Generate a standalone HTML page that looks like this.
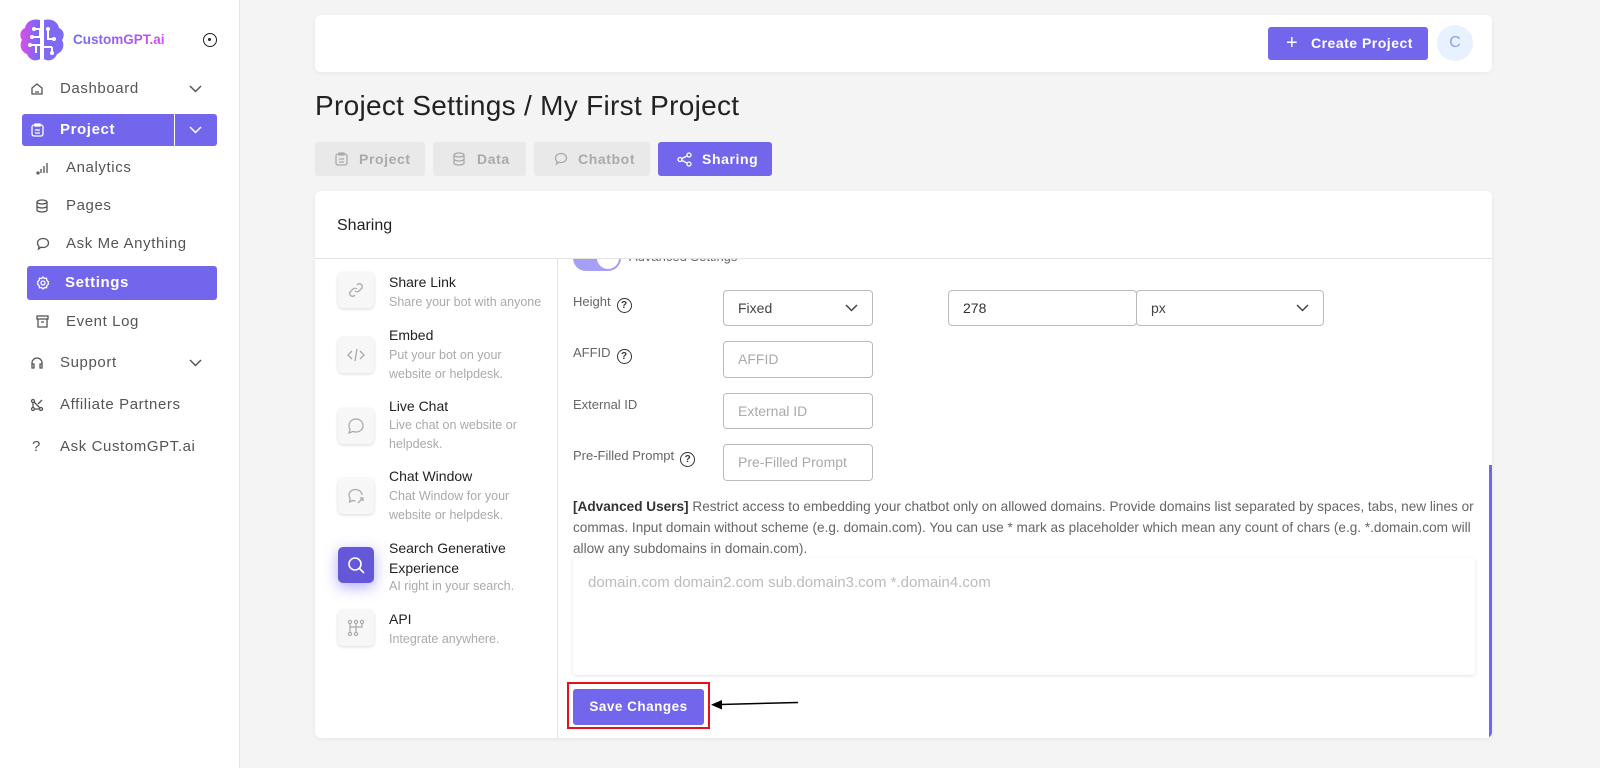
<!DOCTYPE html>
<html><head><meta charset="utf-8"><style>
*{box-sizing:border-box;margin:0;padding:0}
body{width:1600px;height:768px;background:#f4f4f4;font-family:"Liberation Sans","DejaVu Sans",sans-serif;color:#333;position:relative;overflow:hidden}
.abs{position:absolute}
#side{left:0;top:0;width:240px;height:768px;background:#fff;border-right:1px solid #e6e6e6}
.nav{position:absolute;left:0;width:240px;font-size:15px;color:#555;letter-spacing:.6px;height:32px;line-height:32px}
.nav svg{position:absolute;top:9px}
.card{background:#fff;border-radius:6px;box-shadow:0 1px 4px rgba(0,0,0,.06)}
.tab{position:absolute;top:142px;height:34px;background:#e9e9e9;border-radius:3px;color:#aaa;font-weight:bold;font-size:14px;line-height:34px;letter-spacing:.6px}
.tab svg{position:absolute;top:10px}
.ib{position:absolute;left:338px;width:36px;height:36px;background:#f7f7f7;border-radius:5px;box-shadow:0 1px 3px rgba(0,0,0,.15)}
.ib svg{position:absolute;left:9px;top:9px}
.it{position:absolute;left:389px;font-size:14px;color:#222}
.is{position:absolute;left:389px;font-size:12.5px;color:#aaa;line-height:19px}
.lbl{position:absolute;left:573px;font-size:13px;color:#666}
.q{display:inline-block;width:15px;height:15px;border:1.3px solid #333;border-radius:50%;font-size:10px;line-height:13px;text-align:center;color:#333;margin-left:6px;vertical-align:-2px;font-weight:bold}
.inp{position:absolute;border:1px solid #bbb;border-radius:4px;background:#fff;font-size:14px;color:#aaa;padding-left:14px;line-height:34px}
.chev{position:absolute;right:14px;top:13px}
</style></head><body>
<div id="side" class="abs">
 <svg class="abs" style="left:18px;top:17px" width="48" height="46" viewBox="0 0 48 46">
  <defs><linearGradient id="g" x1="0" x2="1"><stop offset="0" stop-color="#e04ce8"/><stop offset="1" stop-color="#6b6cf5"/></linearGradient></defs>
  <path d="M22 3C14 1 8 5 7 11 2 13 1 19 4 23 1 28 3 35 9 37 11 43 18 45 22 42Z" fill="url(#g)"/>
  <path d="M26 3C34 1 40 5 41 11 46 13 47 19 44 23 47 28 45 35 39 37 37 43 30 45 26 42Z" fill="#7f6af3"/>
  <g stroke="#fff" stroke-width="2" fill="none"><path d="M16 12h6v8h-8M12 28h10M18 36v-8M30 12v10h6M26 30h8M34 30v6"/></g>
  <g fill="#fff"><circle cx="16" cy="12" r="2"/><circle cx="14" cy="20" r="2"/><circle cx="12" cy="28" r="2"/><circle cx="36" cy="22" r="2"/><circle cx="34" cy="36" r="2"/><circle cx="30" cy="12" r="2"/></g>
 </svg>
 <div class="abs" style="left:73px;top:32px;font-weight:bold;font-size:13.5px;background:linear-gradient(90deg,#6b6cf5,#d44cf0);-webkit-background-clip:text;color:transparent">CustomGPT.ai</div>
 <div class="abs" style="left:203px;top:33px;width:14px;height:14px;border:1.5px solid #222;border-radius:50%"><div style="position:absolute;left:4px;top:4px;width:3px;height:3px;background:#222;border-radius:50%"></div></div>

 <div class="nav" style="top:73px"><svg style="left:30px" width="14" height="14" viewBox="0 0 14 14" fill="none" stroke="#555" stroke-width="1.3"><path d="M2 12V6l5-4 5 4v6zM5 10h4"/></svg><span style="position:absolute;left:60px">Dashboard</span><svg style="left:189px;top:12px" width="13" height="8" viewBox="0 0 13 8" fill="none" stroke="#555" stroke-width="1.5"><path d="M1 1l5.5 5.5L12 1"/></svg></div>
 <div class="abs" style="left:22px;top:114px;width:152px;height:32px;background:#7166ec;border-radius:3px 0 0 3px;color:#fff;font-size:15px;line-height:32px;letter-spacing:.6px"><svg class="abs" style="left:9px;top:9px" width="13" height="14" viewBox="0 0 13 14" fill="none" stroke="#fff" stroke-width="1.3"><rect x="1" y="2" width="11" height="11" rx="2"/><path d="M4 1h5v2H4zM4 7h5M4 10h5"/></svg><span style="position:absolute;left:38px;font-weight:bold">Project</span></div>
 <div class="abs" style="left:175px;top:114px;width:42px;height:32px;background:#7166ec;border-radius:0 3px 3px 0"><svg class="abs" style="left:14px;top:12px" width="13" height="8" viewBox="0 0 13 8" fill="none" stroke="#fff" stroke-width="1.5"><path d="M1 1l5.5 5.5L12 1"/></svg></div>
 <div class="nav" style="top:152px"><svg style="left:36px" width="14" height="14" viewBox="0 0 14 14" fill="none" stroke="#555" stroke-width="1.3"><circle cx="2" cy="12" r="1"/><path d="M5 12V8M8 12V5M11 12V2"/></svg><span style="position:absolute;left:66px">Analytics</span></div>
 <div class="nav" style="top:190px"><svg style="left:36px" width="12" height="14" viewBox="0 0 12 14" fill="none" stroke="#555" stroke-width="1.3"><ellipse cx="6" cy="3" rx="5" ry="2"/><path d="M1 3v8c0 1 2 2 5 2s5-1 5-2V3M1 7c0 1 2 2 5 2s5-1 5-2"/></svg><span style="position:absolute;left:66px">Pages</span></div>
 <div class="nav" style="top:228px"><svg style="left:36px" width="14" height="14" viewBox="0 0 14 14" fill="none" stroke="#555" stroke-width="1.3"><path d="M7 1.5c3.3 0 5.5 2 5.5 4.5S10.3 10.5 7 10.5c-.8 0-1.5 0-2-.3L2.5 12l.5-2.5C2 8.6 1.5 7.4 1.5 6 1.5 3.5 3.7 1.5 7 1.5z"/></svg><span style="position:absolute;left:66px">Ask Me Anything</span></div>
 <div class="abs" style="left:27px;top:266px;width:190px;height:34px;background:#7166ec;border-radius:3px;color:#fff;font-weight:bold;font-size:15px;line-height:34px;letter-spacing:.6px"><svg class="abs" style="left:9px;top:10px" width="14" height="14" viewBox="0 0 14 14" fill="none" stroke="#fff" stroke-width="1.3"><circle cx="7" cy="7" r="2"/><path d="M7 1l1.5 1.5 2-.3.3 2L12.5 6 12 7l.5 1-1.7 1.8-.3 2-2 -.3L7 13l-1.5-1.5-2 .3-.3-2L1.5 8 2 7l-.5-1 1.7-1.8.3-2 2 .3z"/></svg><span style="position:absolute;left:38px">Settings</span></div>
 <div class="nav" style="top:306px"><svg style="left:36px" width="13" height="13" viewBox="0 0 13 13" fill="none" stroke="#555" stroke-width="1.3"><rect x="1" y="1" width="11" height="3"/><path d="M2 4v8h9V4M5 7h3"/></svg><span style="position:absolute;left:66px">Event Log</span></div>
 <div class="nav" style="top:347px"><svg style="left:30px" width="14" height="14" viewBox="0 0 14 14" fill="none" stroke="#555" stroke-width="1.3"><path d="M2 11V7a5 5 0 0110 0v4M2 8h2v4H2zM10 8h2v4h-2z"/></svg><span style="position:absolute;left:60px">Support</span><svg style="left:189px;top:12px" width="13" height="8" viewBox="0 0 13 8" fill="none" stroke="#555" stroke-width="1.5"><path d="M1 1l5.5 5.5L12 1"/></svg></div>
 <div class="nav" style="top:389px"><svg style="left:30px" width="14" height="14" viewBox="0 0 14 14" fill="none" stroke="#555" stroke-width="1.3"><circle cx="3" cy="3" r="1.5"/><circle cx="3" cy="11" r="1.5"/><circle cx="11" cy="11" r="1.5"/><path d="M3 4.5V9.5M4.5 11h5M4 4l6 6M12 2l-4 4"/></svg><span style="position:absolute;left:60px">Affiliate Partners</span></div>
 <div class="nav" style="top:431px"><span style="position:absolute;left:32px">?</span><span style="position:absolute;left:60px">Ask CustomGPT.ai</span></div>
</div>

<div class="abs card" style="left:315px;top:15px;width:1177px;height:57px"></div>
<div class="abs" style="left:1268px;top:27px;width:160px;height:33px;background:#7166ec;border-radius:3px;color:#fff;font-weight:bold;font-size:14px;line-height:33px;letter-spacing:.5px"><span style="position:absolute;left:18px;font-size:20px;font-weight:normal">+</span><span style="position:absolute;left:43px">Create Project</span></div>
<div class="abs" style="left:1437px;top:25px;width:36px;height:36px;border-radius:50%;background:#e8f1ff;color:#8aa0ec;text-align:center;line-height:36px;font-size:16px">C</div>

<div class="abs" style="left:315px;top:90px;font-size:28px;color:#222;letter-spacing:.3px">Project Settings / My First Project</div>

<div class="tab" style="left:315px;width:110px"><svg style="left:20px" width="13" height="14" viewBox="0 0 13 14" fill="none" stroke="#aaa" stroke-width="1.3"><rect x="1" y="2" width="11" height="11" rx="2"/><path d="M4 1h5v2H4zM4 7h5M4 10h5"/></svg><span style="position:absolute;left:44px">Project</span></div>
<div class="tab" style="left:433px;width:93px"><svg style="left:20px" width="12" height="14" viewBox="0 0 12 14" fill="none" stroke="#aaa" stroke-width="1.3"><ellipse cx="6" cy="3" rx="5" ry="2"/><path d="M1 3v8c0 1 2 2 5 2s5-1 5-2V3M1 7c0 1 2 2 5 2s5-1 5-2"/></svg><span style="position:absolute;left:44px">Data</span></div>
<div class="tab" style="left:534px;width:116px"><svg style="left:20px" width="14" height="14" viewBox="0 0 14 14" fill="none" stroke="#aaa" stroke-width="1.3"><path d="M7 1.5c3.3 0 5.5 2 5.5 4.5S10.3 10.5 7 10.5c-.8 0-1.5 0-2-.3L2.5 12l.5-2.5C2 8.6 1.5 7.4 1.5 6 1.5 3.5 3.7 1.5 7 1.5z"/></svg><span style="position:absolute;left:44px">Chatbot</span></div>
<div class="tab" style="left:658px;width:114px;background:#7166ec;color:#fff"><svg style="left:19px" width="15" height="15" viewBox="0 0 15 15" fill="none" stroke="#fff" stroke-width="1.3"><circle cx="3" cy="7.5" r="2"/><circle cx="12" cy="3" r="2"/><circle cx="12" cy="12" r="2"/><path d="M5 6.5l5-2.5M5 8.5l5 2.5"/></svg><span style="position:absolute;left:44px">Sharing</span></div>

<div class="abs card" style="left:315px;top:191px;width:1177px;height:547px;overflow:hidden">
 <div class="abs" style="left:22px;top:26px;font-size:16px;color:#222">Sharing</div>
 <div class="abs" style="left:0;top:67px;width:1177px;height:1px;background:#e3e3e3"></div>
 <div class="abs" style="left:242px;top:68px;width:1px;height:480px;background:#e3e3e3"></div>
 <div class="abs" style="left:1174px;top:274px;width:3px;height:273px;background:#7166ec"></div>
</div>

<!-- left list -->
<div class="ib" style="top:272px"><svg width="18" height="18" viewBox="0 0 18 18" fill="none" stroke="#aaa" stroke-width="1.3"><path d="M8 10a3 3 0 004 0l3-3a3 3 0 00-4-4l-1 1M10 8a3 3 0 00-4 0l-3 3a3 3 0 004 4l1-1"/></svg></div>
<div class="it" style="top:274px">Share Link</div><div class="is" style="top:293px">Share your bot with anyone</div>
<div class="ib" style="top:337px"><svg width="18" height="18" viewBox="0 0 18 18" fill="none" stroke="#aaa" stroke-width="1.3"><path d="M5 5L1 9l4 4M13 5l4 4-4 4M10 3L8 15"/></svg></div>
<div class="it" style="top:327px">Embed</div><div class="is" style="top:346px">Put your bot on your<br>website or helpdesk.</div>
<div class="ib" style="top:408px"><svg width="18" height="18" viewBox="0 0 18 18" fill="none" stroke="#aaa" stroke-width="1.3"><path d="M9 2c4 0 7 3 7 6.5S13 15 9 15c-1 0-2-.2-3-.6L2 16l1-3.5C2.3 11.3 2 10 2 8.5 2 5 5 2 9 2z"/><path d="M6 9h.1M9 9h.1M12 9h.1" stroke-width="1.8"/></svg></div>
<div class="it" style="top:398px">Live Chat</div><div class="is" style="top:416px">Live chat on website or<br>helpdesk.</div>
<div class="ib" style="top:478px"><svg width="18" height="18" viewBox="0 0 18 18" fill="none" stroke="#aaa" stroke-width="1.3"><path d="M15 8c0-3-3-5.5-6.5-5.5S2 5 2 8c0 1.4.4 2.5 1.2 3.5L2.5 15l3.5-1.5c.8.3 1.6.5 2.5.5M11 16l5-5M13 11h3v3"/><path d="M6 8h.1M9 8h.1M12 8h.1" stroke-width="1.8"/></svg></div>
<div class="it" style="top:468px">Chat Window</div><div class="is" style="top:487px">Chat Window for your<br>website or helpdesk.</div>
<div class="ib" style="top:547px;background:#6458d9;box-shadow:0 4px 14px rgba(113,102,236,.55)"><svg width="18" height="18" viewBox="0 0 18 18" fill="none" stroke="#fff" stroke-width="1.6"><circle cx="8" cy="8" r="6"/><path d="M12.5 12.5L17 17"/></svg></div>
<div class="it" style="top:538px;line-height:20px">Search Generative<br>Experience</div><div class="is" style="top:577px">AI right in your search.</div>
<div class="ib" style="top:610px"><svg width="18" height="18" viewBox="0 0 18 18" fill="none" stroke="#aaa" stroke-width="1.2"><circle cx="3" cy="3" r="1.6"/><circle cx="9" cy="3" r="1.6"/><circle cx="15" cy="3" r="1.6"/><circle cx="3" cy="15" r="1.6"/><circle cx="9" cy="15" r="1.6"/><path d="M3 5v8M9 5v8M15 5v3H3"/></svg></div>
<div class="it" style="top:611px">API</div><div class="is" style="top:630px">Integrate anywhere.</div>

<!-- right -->
<div class="abs" style="left:557px;top:259px;width:930px;height:40px;overflow:hidden">
 <div class="abs" style="left:16px;top:-14px;width:48px;height:26px;border-radius:13px;background:#a79ff4"><div style="position:absolute;right:2px;top:2px;width:22px;height:22px;border-radius:50%;background:#fff"></div></div>
 <div class="abs" style="left:72px;top:-10px;font-size:13px;color:#666">Advanced Settings</div>
</div>
<div class="lbl" style="top:294px">Height<span class="q">?</span></div>
<div class="inp" style="left:723px;top:290px;width:150px;height:36px;color:#444">Fixed<svg class="chev" width="13" height="8" viewBox="0 0 13 8" fill="none" stroke="#444" stroke-width="1.5"><path d="M1 1l5.5 5.5L12 1"/></svg></div>
<div class="inp" style="left:948px;top:290px;width:189px;height:36px;color:#333">278</div>
<div class="inp" style="left:1136px;top:290px;width:188px;height:36px;color:#444">px<svg class="chev" width="13" height="8" viewBox="0 0 13 8" fill="none" stroke="#444" stroke-width="1.5"><path d="M1 1l5.5 5.5L12 1"/></svg></div>
<div class="lbl" style="top:345px">AFFID<span class="q">?</span></div>
<div class="inp" style="left:723px;top:341px;width:150px;height:37px">AFFID</div>
<div class="lbl" style="top:397px">External ID</div>
<div class="inp" style="left:723px;top:393px;width:150px;height:36px">External ID</div>
<div class="lbl" style="top:448px">Pre-Filled Prompt<span class="q">?</span></div>
<div class="inp" style="left:723px;top:444px;width:150px;height:37px">Pre-Filled Prompt</div>

<div class="abs" style="left:573px;top:496px;font-size:13.6px;color:#666;line-height:21px;white-space:nowrap"><b style="color:#333">[Advanced Users]</b> Restrict access to embedding your chatbot only on allowed domains. Provide domains list separated by spaces, tabs, new lines or<br>commas. Input domain without scheme (e.g. domain.com). You can use * mark as placeholder which mean any count of chars (e.g. *.domain.com will<br>allow any subdomains in domain.com).</div>
<div class="abs" style="left:573px;top:558px;width:902px;height:117px;background:#fff;box-shadow:0 1px 3px rgba(0,0,0,.12);border-radius:3px"><div style="position:absolute;left:15px;top:16px;font-size:15px;color:#bbb">domain.com domain2.com sub.domain3.com *.domain4.com</div></div>

<div class="abs" style="left:567px;top:682px;width:143px;height:47px;border:2px solid #e4101a"></div>
<div class="abs" style="left:573px;top:689px;width:131px;height:36px;background:#7166ec;border-radius:3px;color:#fff;font-weight:bold;font-size:13.5px;line-height:36px;text-align:center;letter-spacing:.5px">Save Changes</div>
<svg class="abs" style="left:710px;top:697px" width="90" height="14" viewBox="0 0 90 14"><path d="M10 7.5L88 5.5" stroke="#000" stroke-width="1.5"/><path d="M1 7.8L12 3v9.5z" fill="#000"/></svg>
</body></html>
